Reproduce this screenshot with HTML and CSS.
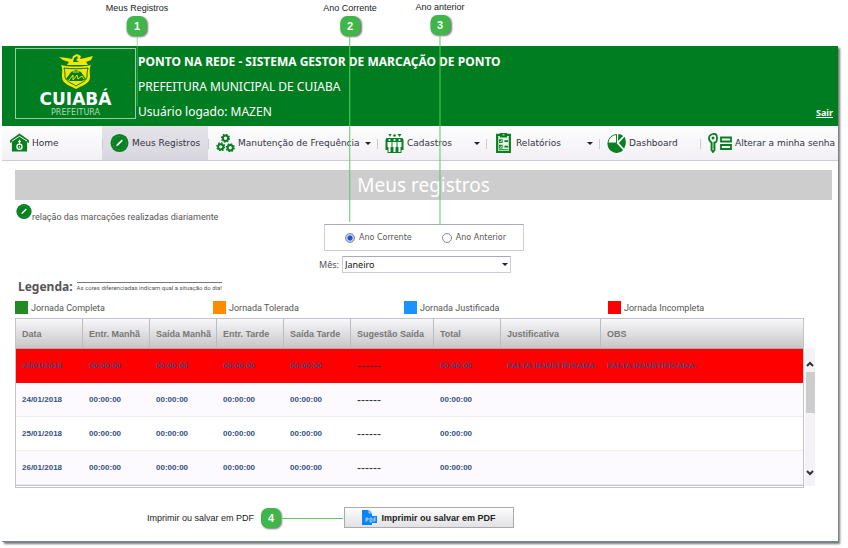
FILE: index.html
```html
<!DOCTYPE html>
<html lang="pt-BR">
<head>
<meta charset="utf-8">
<title>Ponto na Rede - Meus registros</title>
<link rel="stylesheet" href="styles.css">
</head>
<body>
<svg class="sprite" aria-hidden="true">
  <symbol id="pencil" viewBox="0 0 20 20">
    <circle cx="10" cy="10" r="9.5" fill="#087f20"/>
    <circle cx="10" cy="10" r="7" fill="none" stroke="#4da65c" stroke-width=".7" stroke-dasharray="2 1.5"/>
    <path d="M6.500 13.500l.8-2.200 5-5 1.300 1.300-5 5z" fill="#fff"/>
  </symbol>
  <symbol id="gear" viewBox="-10 -10 20 20">
    <circle r="5.6" fill="none" stroke="#087f20" stroke-width="4.2"/>
    <circle r="8.2" fill="none" stroke="#087f20" stroke-width="3" stroke-dasharray="3.2 3.24"/>
  </symbol>
</svg>
<main class="guide">
  <section class="window">
    <header class="banner">
      <div class="logo">
        <svg class="crest" viewBox="0 0 38 36" aria-hidden="true">
          <path d="M2 3l8 1 5 1 1-3 4-2 4 2-1 3 5-1 8-2-2 4-5 2 2 3H10l2-3-6-2z" fill="#f7e600"/>
          <path d="M17 4l3-2 1 2-2 2 3 2h-6z" fill="#007d20"/>
          <path d="M4 11c9 2 21 2 30 0-2 4-1 7-1 12 0 7-9 9-14 12C14 32 5 30 5 23c0-5 1-8-1-12z" fill="#f7e600"/>
          <path d="M7 14c7 1 17 1 24 0-1 4-1 6-1 9-1 5-7 6-11 9-4-3-10-4-11-9 0-3 0-5-1-9z" fill="none" stroke="#007d20"/>
          <path d="M9 25l5-7 5-2 5 2 5 7-4 2H13z" fill="#007d20"/>
          <path d="M12 26l4-5v5l4-5 1 4 4-3 2 3M16 18h6" fill="none" stroke="#f7e600"/>
        </svg>
        <strong class="logo-name">CUIABÁ</strong>
        <span class="logo-sub">PREFEITURA</span>
      </div>
      <div class="identity">
        <h1>PONTO NA REDE - SISTEMA GESTOR DE MARCAÇÃO DE PONTO</h1>
        <p>PREFEITURA MUNICIPAL DE CUIABA</p>
        <p>Usuário logado: MAZEN</p>
      </div>
      <a class="logout" href="#sair">Sair</a>
    </header>

    <nav class="menu">
      <a href="#home" class="lead">
        <svg class="icon" viewBox="0 0 20 20" aria-hidden="true"><path d="M0 7l10-7 10 7v3l-2-1v10H2V9L0 10z" fill="#087f20"/><path d="M2 8l8-5 8 5" fill="none" stroke="#fff" stroke-width="1"/><circle cx="10" cy="14" r="2.7" fill="none" stroke="#fff" stroke-width="1.3"/><path d="M10 6.500v5M8.500 8.500h3M10 13.500v1.500" stroke="#fff" stroke-width="1.300"/></svg>
        <span>Home</span></a>
      <a href="#registros" class="lead current"><svg class="icon" aria-hidden="true"><use href="#pencil"/></svg><span>Meus Registros</span></a>
      <a href="#frequencia">
        <svg class="icon" viewBox="0 0 20 20" aria-hidden="true"><use href="#gear" x="5" y="0" width="10" height="10"/><use href="#gear" x="0" y="9" width="10" height="10"/><use href="#gear" x="10" y="10" width="10" height="10"/></svg>
        <span>Manutenção de Frequência</span><i class="caret"></i></a>
      <a href="#cadastros">
        <svg class="icon" viewBox="0 0 18 20" aria-hidden="true"><g fill="#087f20"><path d="M3 1h3L4.500 4zM12 1h4l-2 3z"/><circle cx="9" cy="2.500" r="1.300"/><path d="M1 5h16l1 2v10h-2v3H2v-3H0V7z"/></g><g fill="#fff"><circle cx="4" cy="7" r="1.100"/><circle cx="9" cy="7" r="1.100"/><circle cx="14" cy="7" r="1.100"/><path d="M2 9h4v5H5v5H3v-5H2zM7 9h4v5h-1v5H8v-5H7zM12 9h4v5h-1v5h-2v-5h-1z"/></g></svg>
        <span>Cadastros</span><i class="caret"></i></a>
      <a href="#relatorios">
        <svg class="icon" viewBox="0 0 18 22" aria-hidden="true"><path d="M2 2h14v19H2z" fill="#e9f4e9" stroke="#087f20" stroke-width="2.400"/><path d="M5 0h8v5H5zM4 7h4v4H4zM4 13h4v4H4zM10 8h4v2h-4zM10 14h4v2h-4zM4 18h10v1H4z" fill="#087f20"/><path d="M5 9l1 1 1-2M5 15l1 1 1-2M8 2h2" fill="none" stroke="#fff"/></svg>
        <span>Relatórios</span><i class="caret"></i></a>
      <a href="#dashboard">
        <svg class="icon" viewBox="0 0 20 20" aria-hidden="true"><path d="M10 10l7 7.500A9.700 9.700 0 0 1 .5 10z" fill="#087f20"/><path d="M10 10H1Q2 2 10 1z" fill="#fff" stroke="#087f20"/><path d="M11.500 8L12 .5q3 0 5 2zM12.500 10l6-6.500q3 6-.5 12.500z" fill="#087f20"/></svg>
        <span>Dashboard</span></a>
      <a href="#senha" class="last">
        <svg class="icon wide" viewBox="0 0 24 20" aria-hidden="true"><g fill="none" stroke="#087f20" stroke-width="1.800"><path d="M3.500 9.500Q1 8 1 5t4-4 4 4-2.500 4.500V17L5 19l-1.500-2z"/><path d="M13 4.500h10v4H13zM13 12h10v4H13z"/></g><path d="M4 4h2v2H4zM5 9v7" fill="#087f20" stroke="#087f20" stroke-width=".6"/></svg>
        <span>Alterar a minha senha</span></a>
    </nav>

    <div class="content">
      <h2>Meus registros</h2>
      <p class="intro"><svg class="icon" aria-hidden="true"><use href="#pencil"/></svg><span>relação das marcações realizadas diariamente</span></p>

      <form class="filters">
        <div class="years">
          <label><input type="radio" name="ano" checked>Ano Corrente</label>
          <label><input type="radio" name="ano">Ano Anterior</label>
        </div>
        <div class="month">
          <label for="mes">Mês:</label>
          <div class="select"><select id="mes"><option>Janeiro</option></select><i class="caret"></i></div>
        </div>
      </form>

      <div class="legend-head"><h3>Legenda:</h3><small>As cores diferenciadas indicam qual a situação do dia!</small></div>
      <ul class="legend">
        <li><i class="green"></i>Jornada Completa</li>
        <li><i class="orange"></i>Jornada Tolerada</li>
        <li><i class="blue"></i>Jornada Justificada</li>
        <li><i class="red"></i>Jornada Incompleta</li>
      </ul>

      <div class="records">
        <table>
          <colgroup><col class="c-time"><col class="c-time"><col class="c-time"><col class="c-time"><col class="c-time"><col class="c-hint"><col class="c-time"><col class="c-reason"><col></colgroup>
          <thead><tr><th>Data</th><th>Entr. Manhã</th><th>Saída Manhã</th><th>Entr. Tarde</th><th>Saída Tarde</th><th>Sugestão Saída</th><th>Total</th><th>Justificativa</th><th>OBS</th></tr></thead>
          <tbody>
            <tr class="missing"><td>23/01/2018</td><td>00:00:00</td><td>00:00:00</td><td>00:00:00</td><td>00:00:00</td><td class="dash">------</td><td>00:00:00</td><td>FALTA INJUSTIFICADA.</td><td>FALTA INJUSTIFICADA.</td></tr>
            <tr><td>24/01/2018</td><td>00:00:00</td><td>00:00:00</td><td>00:00:00</td><td>00:00:00</td><td class="dash">------</td><td>00:00:00</td><td></td><td></td></tr>
            <tr><td>25/01/2018</td><td>00:00:00</td><td>00:00:00</td><td>00:00:00</td><td>00:00:00</td><td class="dash">------</td><td>00:00:00</td><td></td><td></td></tr>
            <tr><td>26/01/2018</td><td>00:00:00</td><td>00:00:00</td><td>00:00:00</td><td>00:00:00</td><td class="dash">------</td><td>00:00:00</td><td></td><td></td></tr>
          </tbody>
        </table>
        <div class="scrollbar" aria-hidden="true">
          <svg viewBox="0 0 8 6"><path d="M1 5l3-3 3 3" /></svg>
          <i class="thumb"></i>
          <svg class="down" viewBox="0 0 8 6"><path d="M1 1l3 3 3-3" /></svg>
        </div>
      </div>

      <button class="print" type="button">
        <svg viewBox="0 0 16 15" aria-hidden="true"><path d="M0 0h7l3 3v3h5v7h-5v2H0z" fill="#0b84f5"/><path d="M7 0v3h3" fill="none" stroke="#fff" stroke-width=".7"/><path d="M4 12V8h2v2H4M8 8v4h1.500l.5-1V9l-.5-1zM12 12V8h2M12 10h2" fill="none" stroke="#cfe6ff" stroke-width=".8"/></svg>
        Imprimir ou salvar em PDF
      </button>
    </div>
  </section>

  <div class="note note-1"><span>Meus Registros</span><b>1</b><i></i></div>
  <div class="note note-2"><span>Ano Corrente</span><b>2</b><i></i></div>
  <div class="note note-3"><span>Ano anterior</span><b>3</b><i></i></div>
  <div class="note note-4"><span>Imprimir ou salvar em PDF</span><b>4</b><i></i></div>
</main>
</body>
</html>
```
FILE: styles.css
```css
* { box-sizing: border-box; }
body { margin: 0; background: #fff; color: #555; font: 9px/12px Roboto, "Noto Sans", sans-serif; }
h1, h2, h3, p, ul { margin: 0; padding: 0; }
.sprite { position: absolute; width: 0; height: 0; }
.guide { position: relative; padding: 46px 10px 6px 2px; }
.window { border-bottom: 1px solid #6f8790; box-shadow: 2px 2px 2px #777; background: #fff; }

.banner { display: flex; gap: 2px; padding: 2px 5px 2px 13px; background: #007d20; color: #fff; font-family: "Noto Sans", sans-serif; }
.logo { display: flex; flex-direction: column; align-items: center; width: 121px; height: 71px; padding-top: 5px; border: 1px solid #9ccba5; }
.crest { width: 38px; height: 36px; }
.logo-name { font: bold 17px/18px "DejaVu Sans", sans-serif; }
.logo-sub { font: 8px/9px "DejaVu Sans", sans-serif; color: #b5dabc; }
.identity { flex: 1; padding-top: 1px; }
.identity h1, .identity p { font-size: 12px; line-height: 25px; }
.identity h1 { font-weight: bold; }
.logout { align-self: flex-end; padding-bottom: 5px; color: #fff; font-weight: bold; }

.menu { display: grid; grid-template-columns: 100fr 106fr 169fr 109fr 113fr 101fr 138fr; height: 35px; border-bottom: 1px solid #ccccd4; background: linear-gradient(#fdfdfd, #f3f0f5); }
.menu a { position: relative; display: flex; align-items: center; gap: 3px; min-width: 0; padding: 0 6px 0 8px; color: #33333f; font: 9px/12px "DejaVu Sans", sans-serif; text-decoration: none; white-space: nowrap; }
.menu .last { padding-right: 0; }
.menu a + a::before { content: ""; position: absolute; left: 0; top: 13px; height: 10px; border-left: 1px solid #ccc; }
.menu .current { background: linear-gradient(#e4e3ea, #d8d7df); }
.icon { flex: none; width: 19px; height: 20px; }
.icon.wide { width: 24px; }
.caret { border: 3px solid transparent; border-top-color: #222; border-bottom: 0; }
.menu .caret { margin-left: auto; }

.content { display: flex; flex-direction: column; padding: 9px 6px 13px 13px; }
h2 { background: #cdcdcd; color: #fff; font: 19px/30px "Noto Sans", sans-serif; text-align: center; }
.intro { display: flex; align-items: flex-end; padding: 3px 0 0 1px; }
.intro .icon { width: 16px; height: 17px; margin-bottom: 3px; }
.filters { display: flex; flex-direction: column; align-items: center; gap: 5px; padding-top: 1px; }
.years { display: flex; justify-content: center; gap: 30px; width: 200px; height: 27px; padding-left: 4px; border: 1px solid #ccccd5; border-top-color: #aab; }
.years label { display: flex; align-items: center; gap: 4px; font: 8px/12px "DejaVu Sans", sans-serif; }
.years input { appearance: none; width: 10px; height: 10px; margin: 0; border: 1px solid #889; border-radius: 50%; background: #fff; }
.years input:checked { background: radial-gradient(#2356c0 0 2px, #b7cdf5 3px); }
.month { display: flex; align-items: center; gap: 3px; margin-right: 17px; font-family: "Noto Sans", sans-serif; }
.select { position: relative; }
.select select { display: block; appearance: none; width: 169px; height: 17px; padding: 0 2px; border: 1px solid #ccccd5; border-top-color: #aab; border-radius: 0; background: #fff; color: #111; font: 9px/12px "Noto Sans", sans-serif; }
.select .caret { position: absolute; right: 3px; top: 7px; }

.legend-head { display: flex; align-items: center; gap: 4px; padding: 5px 0 0 3px; }
h3 { font: bold 12px/17px "Noto Sans", sans-serif; }
small { border-top: 1px solid #777; font-size: 6px; line-height: 9px; }
.legend { display: grid; grid-template-columns: 198fr 191fr 204fr 224fr; padding: 6px 0 4px; list-style: none; }
.legend li { display: flex; align-items: flex-end; gap: 3px; line-height: 11px; }
.legend i { width: 13px; height: 13px; }
.green { background: #1f8b22; }
.orange { background: #ff8c00; }
.blue { background: #1e90ff; }
.red { background: #f00; }

.records { display: flex; gap: 1px; padding-right: 17px; }
table { flex: 1; width: 100%; table-layout: fixed; border-collapse: separate; border-spacing: 0; border: 1px solid #c3c3ca; border-bottom: 3px double #c3c3ca; font: bold 8px/12px "Liberation Sans", Arial, sans-serif; white-space: nowrap; }
.c-time { width: 67px; }
.c-hint { width: 83px; }
.c-reason { width: 100px; }
th, td { padding: 0 0 0 6px; text-align: left; }
th { height: 30px; border-right: 1px solid #bbbbc2; border-bottom: 1px solid #aaa; background: linear-gradient(#f8f8fa, #c6c6c8); color: #777; font-size: 9px; }
th:last-child { border-right: 0; }
td { height: 34px; border-bottom: 1px solid #eeeef0; color: #33507f; }
tbody tr:nth-child(even) { background: #fdfaff; }
tbody tr.missing { background: #f00; }
.missing td { border-bottom-color: #f00; color: #4f4478; }
td.dash, .missing td.dash { color: #333; font-size: 12px; font-weight: normal; }
.scrollbar { display: flex; flex-direction: column; align-items: center; width: 10px; margin: 30px 0 2px; padding: 13px 0 10px; background: #f5f2f7; }
.scrollbar svg { width: 8px; height: 6px; fill: none; stroke: #333; stroke-width: 2; }
.thumb { width: 9px; height: 41px; margin-top: 5px; background: #cdcdcd; }
.scrollbar .down { margin-top: auto; }

.print { display: flex; align-items: center; justify-content: center; gap: 3px; align-self: center; width: 170px; height: 21px; margin: 19px 0 0 11px; padding: 0; border: 1px solid #aaa; background: linear-gradient(#fcfcfd, #e2e2e5); color: #222; font: bold 9px/12px "Liberation Sans", Arial, sans-serif; }
.print svg { width: 16px; height: 15px; }

/* Numbered callouts lying over the application window */
.note { position: absolute; display: flex; flex-direction: column; align-items: center; color: #222; font: 9px/12px "Liberation Sans", Arial, sans-serif; white-space: nowrap; transform: translateX(-50%); }
.note b { display: block; width: 20px; height: 20px; margin-top: 2px; border-radius: 7px; background: #3fb54a; box-shadow: 1px 1px 2px #777; color: #fff; font-size: 11px; line-height: 20px; text-align: center; }
.note i { width: 1px; background: #58cc5c; }
.note-1 { left: 137px; top: 2px; }
.note-1 i { height: 70px; opacity: .6; }
.note-2 { left: 350px; top: 2px; }
.note-2 i { height: 186px; }
.note-3 { left: 440px; top: 1px; }
.note-3 i { height: 190px; }
.note-4 { left: 147px; top: 508px; flex-direction: row; gap: 7px; transform: none; }
.note-4 b { margin: 0; }
.note-4 i { width: 62px; height: 1px; margin-left: -7px; }
```
